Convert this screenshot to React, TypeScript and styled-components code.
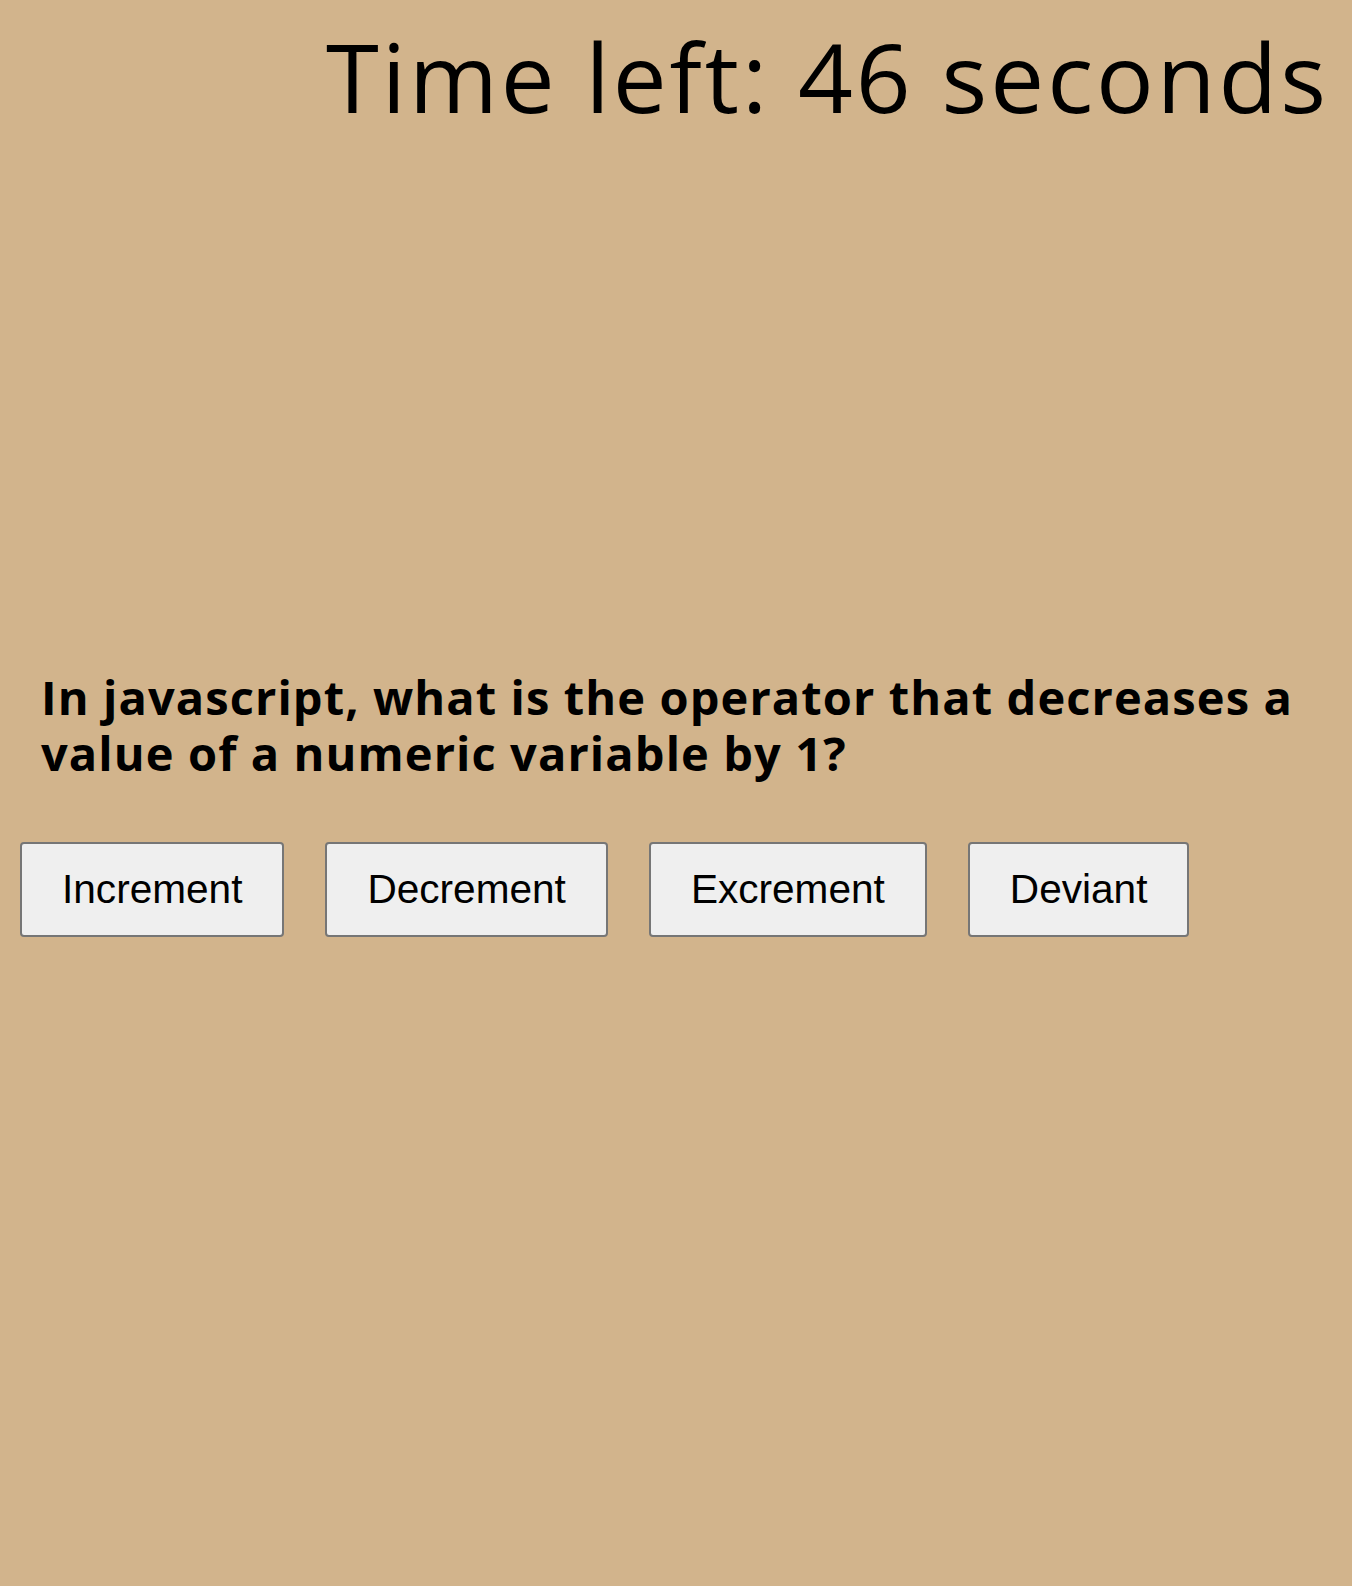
import React from "react";
import styled, { createGlobalStyle } from "styled-components";

const Global = createGlobalStyle`
  html, body {
    margin: 0;
    padding: 0;
    background: #d2b48c;
  }
  body {
    min-height: 1586px;
    font-family: "Open Sans", "DejaVu Sans", sans-serif;
    color: #000;
  }
`;

const Page = styled.main`
  display: flex;
  flex-direction: column;
  min-height: 1586px;
`;

const Timer = styled.h1`
  margin: 0;
  padding: 16px 23px 0 0;
  text-align: right;
  font-family: "Open Sans", sans-serif;
  font-weight: 400;
  font-size: 96px;
  line-height: 120px;
  letter-spacing: 2.95px;
`;

const Question = styled.h2`
  margin: 534px 0 0 0;
  padding: 0 30px 0 41px;
  font-family: "Open Sans", sans-serif;
  font-weight: 700;
  font-size: 47px;
  line-height: 55.6px;
  letter-spacing: 1.1px;
`;

const Choices = styled.div`
  display: flex;
  gap: 41px;
  padding: 0 0 0 20px;
  margin-top: 61px;
`;

const Choice = styled.button`
  box-sizing: border-box;
  padding: 22px 40px 22.5px;
  border: 2px solid #767676;
  border-radius: 4px;
  background: #efefef;
  font-family: "Liberation Sans", Arial, sans-serif;
  font-size: 40.6px;
  line-height: 46px;
  color: #000;
  cursor: pointer;
`;

const answers = ["Increment", "Decrement", "Excrement", "Deviant"];

export default function App() {
  return (
    <Page>
      <Global />
      <Timer>Time left: 46 seconds</Timer>
      <Question>
        In javascript, what is the operator that decreases a value of a numeric variable by 1?
      </Question>
      <Choices>
        {answers.map((a) => (
          <Choice key={a}>{a}</Choice>
        ))}
      </Choices>
    </Page>
  );
}
